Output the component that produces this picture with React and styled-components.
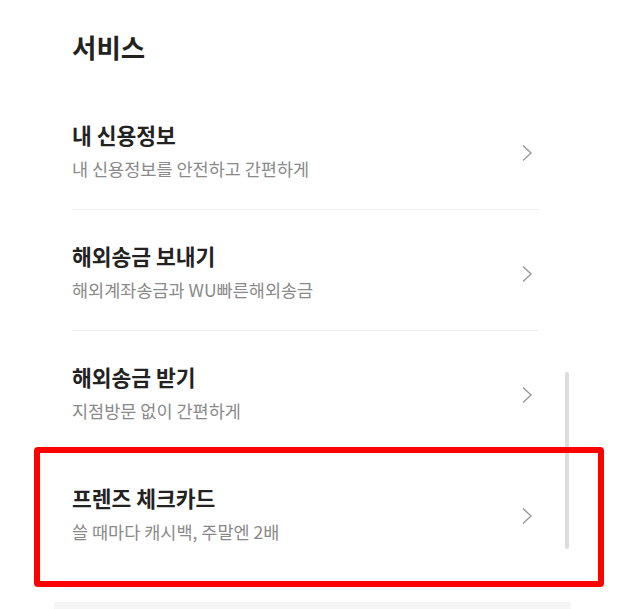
import React from 'react';
import styled, { createGlobalStyle } from 'styled-components';

const GlobalStyle = createGlobalStyle`
  html, body {
    margin: 0;
    padding: 0;
    background: #ffffff;
  }
  body {
    font-family: 'Noto Sans CJK KR', 'Noto Sans', sans-serif;
    -webkit-font-smoothing: antialiased;
  }
`;

const Page = styled.div`
  position: relative;
  width: 633px;
  height: 609px;
  overflow: hidden;
  background: #ffffff;
`;

const Section = styled.section`
  padding: 31px 94px 0 72px;
`;

const Heading = styled.h2`
  margin: 0 0 26px;
  font-size: 26.5px;
  line-height: 32px;
  font-weight: 700;
  color: #222222;
`;

const List = styled.ul`
  list-style: none;
  margin: 0;
  padding: 0;
`;

const Item = styled.li`
  display: flex;
  align-items: center;
  justify-content: space-between;
  padding: 34px 6px 29px 0;
  border-top: ${p => (p.first ? 'none' : '1px solid #eeeeee')};
`;

const Texts = styled.div`
  display: flex;
  flex-direction: column;
  gap: 11px;
`;

const Title = styled.div`
  font-size: 21.5px;
  line-height: 24px;
  font-weight: 700;
  color: #222222;
`;

const Sub = styled.div`
  font-size: 17.5px;
  line-height: 22px;
  color: #8a8a8a;
`;

const Chevron = styled.svg`
  width: 12px;
  height: 18px;
  flex-shrink: 0;
  margin-top: 2px;
`;

const NextCard = styled.div`
  margin: 30px 62px 0 54px;
  height: 20px;
  background: #f5f5f5;
`;

const Scrollbar = styled.div`
  position: absolute;
  left: 565px;
  top: 372px;
  width: 4px;
  height: 177px;
  border-radius: 2px;
  background: #dddddd;
`;

const Highlight = styled.div`
  position: absolute;
  left: 34px;
  top: 447px;
  width: 570px;
  height: 140px;
  box-sizing: border-box;
  border: 6px solid #ff0000;
  border-radius: 4px;
  pointer-events: none;
`;

const items = [
  { title: '내 신용정보', sub: '내 신용정보를 안전하고 간편하게' },
  { title: '해외송금 보내기', sub: '해외계좌송금과 WU빠른해외송금' },
  { title: '해외송금 받기', sub: '지점방문 없이 간편하게' },
  { title: '프렌즈 체크카드', sub: '쓸 때마다 캐시백, 주말엔 2배' }
];

const Arrow = () => (
  <Chevron viewBox="0 0 12 18">
    <path d="M2 1.5 L10 9 L2 16.5" fill="none" stroke="#9a9a9a" strokeWidth="1.4" />
  </Chevron>
);

const App = () => (
  <Page>
    <GlobalStyle />
    <Section>
      <Heading>서비스</Heading>
      <List>
        {items.map((it, i) => (
          <Item key={it.title} first={i === 0}>
            <Texts>
              <Title>{it.title}</Title>
              <Sub>{it.sub}</Sub>
            </Texts>
            <Arrow />
          </Item>
        ))}
      </List>
    </Section>
    <NextCard />
    <Scrollbar />
    <Highlight />
  </Page>
);

export default App;
